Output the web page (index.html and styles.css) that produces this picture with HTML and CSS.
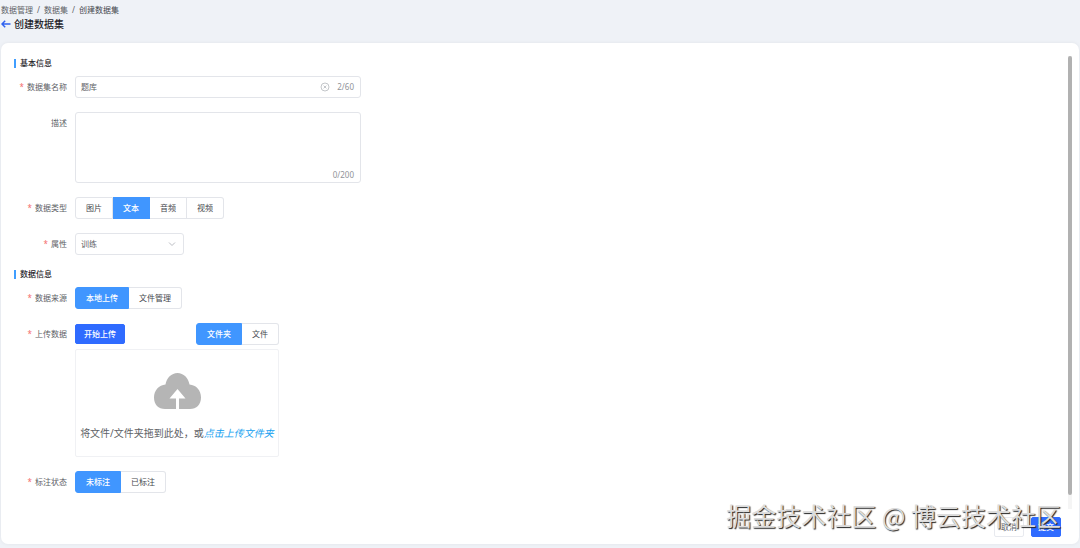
FILE: index.html
```html
<!DOCTYPE html>
<html lang="zh-CN">
<head>
    <meta charset="UTF-8">
    <meta name="viewport" content="width=device-width, initial-scale=1.0">
    <title>创建数据集</title>
    <link rel="stylesheet" href="styles.css">
</head>
<body>
    <header class="page-header">
        <nav class="breadcrumb">
            <a href="#">数据管理</a><span>/</span><a href="#">数据集</a><span>/</span><span class="current">创建数据集</span>
        </nav>
        <div class="page-title">
            <a href="#" class="back" aria-label="返回">
                <svg viewBox="0 0 10 8"><path d="M9.5 4H1M4.2 .8 1 4l3.2 3.2"/></svg>
            </a>
            <h1>创建数据集</h1>
        </div>
    </header>

    <main class="card">
        <div class="scroll-area">
            <form class="form" id="datasetForm">
                <section class="section">
                    <h2>基本信息</h2>
                    <div class="fields">
                        <div class="row">
                            <label class="label required" for="name">数据集名称</label>
                            <div class="field text-field">
                                <input type="text" id="name" value="题库" maxlength="60">
                                <button type="button" class="clear" aria-label="清空">
                                    <svg viewBox="0 0 10 10"><circle cx="5" cy="5" r="4"/><path d="M3.6 3.6l2.8 2.8M6.4 3.6L3.6 6.4"/></svg>
                                </button>
                                <span class="count">2/60</span>
                            </div>
                        </div>
                        <div class="row">
                            <label class="label" for="desc">描述</label>
                            <div class="field area-field">
                                <textarea id="desc" maxlength="200"></textarea>
                                <span class="count">0/200</span>
                            </div>
                        </div>
                        <div class="row">
                            <span class="label required" id="typeLabel">数据类型</span>
                            <div class="segmented" role="radiogroup" aria-labelledby="typeLabel">
                                <label><input type="radio" name="type"><span>图片</span></label>
                                <label><input type="radio" name="type" checked><span>文本</span></label>
                                <label><input type="radio" name="type"><span>音频</span></label>
                                <label><input type="radio" name="type"><span>视频</span></label>
                            </div>
                        </div>
                        <div class="row">
                            <label class="label required" for="attr">属性</label>
                            <div class="select">
                                <select id="attr">
                                    <option>训练</option>
                                </select>
                                <svg viewBox="0 0 8 8"><path d="M1 2.5l3 3 3-3"/></svg>
                            </div>
                        </div>
                    </div>
                </section>

                <section class="section">
                    <h2>数据信息</h2>
                    <div class="fields">
                        <div class="row">
                            <span class="label required" id="sourceLabel">数据来源</span>
                            <div class="segmented" role="radiogroup" aria-labelledby="sourceLabel">
                                <label><input type="radio" name="source" checked><span>本地上传</span></label>
                                <label><input type="radio" name="source"><span>文件管理</span></label>
                            </div>
                        </div>
                        <div class="row">
                            <span class="label required" id="uploadLabel">上传数据</span>
                            <div class="upload">
                                <div class="upload-bar">
                                    <button type="button" class="btn primary">开始上传</button>
                                    <div class="segmented" role="radiogroup" aria-labelledby="uploadLabel">
                                        <label><input type="radio" name="kind" checked><span>文件夹</span></label>
                                        <label><input type="radio" name="kind"><span>文件</span></label>
                                    </div>
                                </div>
                                <div class="dropzone">
                                    <svg viewBox="0 0 48 36">
                                        <path class="cloud" d="M12 36C5.400 36 1 31.500 1 24.500 1 17.500 6 12 12.500 11.500 13.500 5 18.500 0 24.500 0S35.500 5 36.500 11.500C43 12 48 17 48 24.500 48 31.500 43.500 36 37 36z"/>
                                        <path class="arrow" d="M24.500 16l8 9.500h-6.500V36h-3V25.500h-6.500z"/>
                                    </svg>
                                    <p>将文件/文件夹拖到此处，或<a href="#">点击上传文件夹</a></p>
                                </div>
                            </div>
                        </div>
                        <div class="row">
                            <span class="label required" id="markLabel">标注状态</span>
                            <div class="segmented" role="radiogroup" aria-labelledby="markLabel">
                                <label><input type="radio" name="mark" checked><span>未标注</span></label>
                                <label><input type="radio" name="mark"><span>已标注</span></label>
                            </div>
                        </div>
                    </div>
                </section>
            </form>
            <div class="scrollbar"><div class="thumb"></div></div>
        </div>
        <footer class="actions">
            <button type="button" class="btn">取消</button>
            <button type="submit" form="datasetForm" class="btn primary">提交</button>
        </footer>
    </main>

    <div class="watermark">掘金技术社区 @ 博云技术社区</div>
</body>
</html>
```

FILE: styles.css
```css
* {
    box-sizing: border-box;
}

body {
    margin: 0;
    min-height: 100vh;
    display: flex;
    flex-direction: column;
    background: #eff2f7;
    color: #606266;
    font-family: "Noto Sans", "Noto Sans CJK SC", sans-serif;
    font-size: 8px;
    line-height: 14px;
}

input,
textarea,
select,
button {
    font: inherit;
    color: inherit;
}

a {
    color: inherit;
    text-decoration: none;
}

h1,
h2,
p {
    margin: 0;
}

.page-header {
    padding: 3px 1px 12px;
}

.breadcrumb {
    display: flex;
    gap: 4px;
}

.breadcrumb .current {
    color: #45484d;
}

.page-title {
    display: flex;
    align-items: center;
    gap: 3px;
}

.page-title h1 {
    font-size: 10px;
    font-weight: 500;
    line-height: 14px;
    color: #1f2329;
}

.back {
    display: flex;
}

.back svg {
    width: 10px;
    height: 8px;
    fill: none;
    stroke: #2f62f0;
    stroke-width: 1.5;
}

.card {
    flex: 1;
    display: flex;
    flex-direction: column;
    gap: 8px;
    margin: 0 1px 4px;
    padding: 13px 7px 7px 13px;
    background: #fff;
    border-radius: 7px;
    box-shadow: 0 0 4px rgba(0, 0, 0, 0.06);
}

.scroll-area {
    flex: 1;
    display: flex;
    justify-content: space-between;
}

.form {
    flex: 1;
    display: flex;
    flex-direction: column;
    gap: 12px;
}

.scrollbar {
    width: 4px;
    background: #f5f5f5;
}

.thumb {
    height: 97%;
    background: #b1b1b1;
    border-radius: 2px;
}

.section h2 {
    display: flex;
    align-items: center;
    gap: 4px;
    margin-bottom: 6px;
    font-size: 8px;
    font-weight: 500;
    line-height: 14px;
    color: #1f2329;
}

.section h2::before {
    content: "";
    width: 2px;
    height: 9px;
    background: #409eff;
}

.fields {
    display: flex;
    flex-direction: column;
    gap: 14px;
}

.row {
    display: flex;
    gap: 8px;
}

.label {
    width: 53px;
    line-height: 22px;
    text-align: right;
}

.required::before {
    content: "*";
    margin-right: 3px;
    color: #f56c6c;
}

.field {
    display: flex;
    width: 286px;
    border: 1px solid #e3e5ea;
    border-radius: 3px;
}

.field input,
.field textarea {
    flex: 1;
    min-width: 0;
    padding: 0 5px;
    border: none;
    outline: none;
    background: none;
}

.count {
    padding-right: 6px;
    color: #909399;
}

.text-field {
    align-items: center;
    height: 22px;
}

.clear {
    display: flex;
    margin-right: 7px;
    padding: 0;
    border: none;
    background: none;
    cursor: pointer;
}

.clear svg {
    width: 10px;
    height: 10px;
    fill: none;
    stroke: #b4b7bd;
    stroke-width: 0.8;
}

.area-field {
    align-items: flex-end;
    height: 71px;
}

.area-field textarea {
    align-self: stretch;
    resize: none;
}

.segmented {
    display: flex;
}

.segmented input {
    position: absolute;
    opacity: 0;
    margin: 0;
}

.segmented span {
    display: block;
    padding: 0 10px;
    border: 1px solid #e3e5ea;
    line-height: 20px;
    color: #45484d;
    cursor: pointer;
}

.segmented label + label span {
    border-left: none;
}

.segmented label:first-child span {
    border-radius: 3px 0 0 3px;
}

.segmented label:last-child span {
    border-radius: 0 3px 3px 0;
}

.segmented input:checked + span {
    background: #4096ff;
    border-color: #4096ff;
    color: #fff;
    font-weight: 500;
}

.select {
    display: grid;
    align-items: center;
    width: 109px;
    height: 22px;
}

.select select {
    grid-area: 1 / 1;
    height: 22px;
    padding: 0 5px;
    border: 1px solid #e3e5ea;
    border-radius: 3px;
    background: #fff;
    appearance: none;
}

.select svg {
    grid-area: 1 / 1;
    justify-self: end;
    width: 8px;
    height: 8px;
    margin-right: 8px;
    fill: none;
    stroke: #a8abb2;
    stroke-width: 0.8;
    pointer-events: none;
}

.upload {
    width: 204px;
}

.upload-bar {
    display: flex;
    align-items: center;
    justify-content: space-between;
    margin-bottom: 4px;
}

.btn {
    height: 20px;
    padding: 0 8px;
    border: 1px solid #e8eaef;
    border-radius: 2px;
    background: #fff;
    cursor: pointer;
}

.btn.primary {
    background: #2f6bff;
    border-color: #2f6bff;
    color: #fff;
    font-weight: 500;
}

.dropzone {
    display: flex;
    flex-direction: column;
    align-items: center;
    gap: 17px;
    padding: 23px 0 16px;
    border: 1px solid #f0f1f4;
    border-radius: 2px;
}

.dropzone svg {
    width: 48px;
    height: 36px;
}

.dropzone .cloud {
    fill: #b5b5b5;
}

.dropzone .arrow {
    fill: #fff;
}

.dropzone p {
    font-size: 10px;
    white-space: nowrap;
}

.dropzone a {
    color: #11a0f0;
    font-style: italic;
}

.actions {
    display: flex;
    justify-content: flex-end;
    gap: 7px;
    padding-right: 11px;
}

.actions .btn {
    padding: 0 6px;
}

.watermark {
    position: absolute;
    right: 19px;
    bottom: 16px;
    font-family: "Noto Sans CJK SC", sans-serif;
    font-size: 25px;
    line-height: 34px;
    color: #dcdcdc;
    text-shadow: 1px 1px 1px #222;
    pointer-events: none;
}
```
